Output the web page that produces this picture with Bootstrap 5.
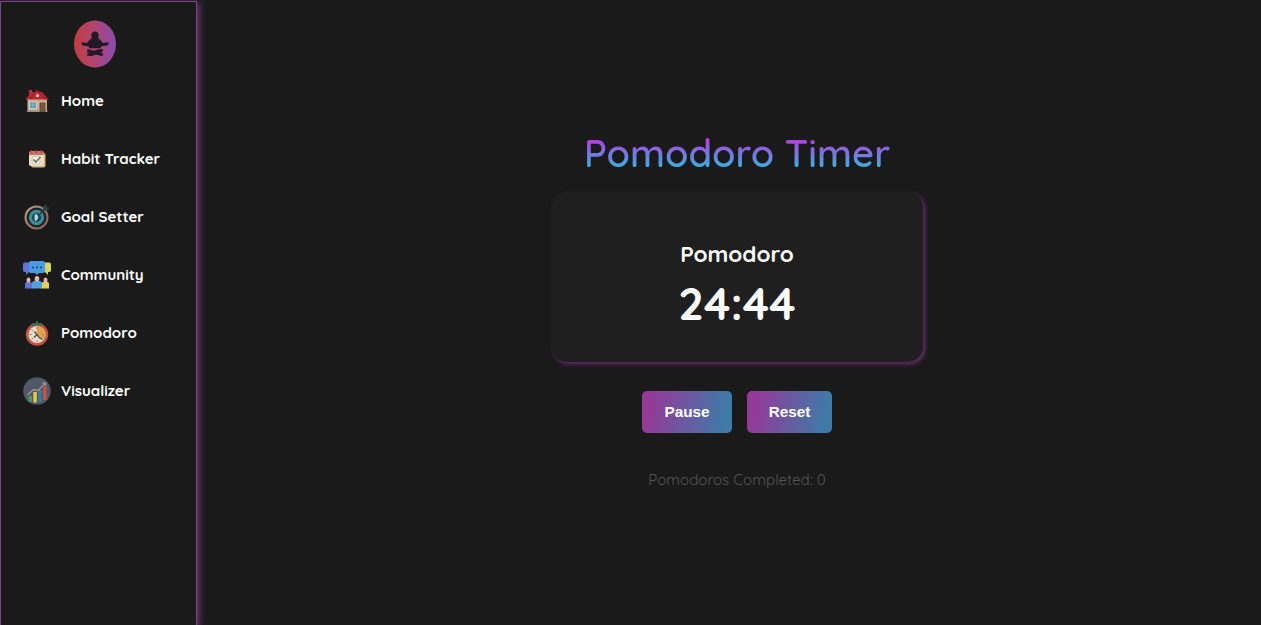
<!DOCTYPE html>
<html lang="en">
<head>
<meta charset="utf-8">
<meta name="viewport" content="width=device-width, initial-scale=1">
<title>Pomodoro Timer</title>
<link href="https://cdn.jsdelivr.net/npm/bootstrap@5.3.0/dist/css/bootstrap.min.css" rel="stylesheet">
<style>
body{background:#1a1a1a;color:#fff;font-family:Quicksand,Lato,sans-serif;overflow:hidden}
.side{width:197px;margin-top:1px;border:1px solid #76458a;border-bottom:0;box-shadow:2px 2px 7px #6b4070}
.brand{height:70px;padding:18px 0 0 72px}
.brand svg,.side-link svg{display:block}
.side-link{height:58px;padding:0 0 0 22px;gap:10px;color:#fff;font-weight:700;font-size:15px;line-height:20px}
.side-link svg{margin-top:-1px}
.side-link:hover{color:#d59be8}
.stage{padding:133px 0 0 16px}
.title{font-size:38.1px;line-height:40px;height:40px;margin-bottom:19px;font-weight:600;background:linear-gradient(#b53be0 15%,#3daee0 85%);background-clip:text;-webkit-background-clip:text;color:transparent}
.timer{width:371px;height:170px;border-radius:15px;background:#1f1f1f;box-shadow:2px 2px 4px #6b2b72;padding-top:48px}
.phase{font-size:22.5px;line-height:28px;font-weight:700;margin-bottom:5px}
.clock{font-size:45px;line-height:60px;font-weight:700}
.actions{gap:15px;margin-top:29px}
.act{height:42px;border:0;border-radius:5px;background:linear-gradient(100deg,#933a98 10%,#3f7aa8 90%);color:#fff;font:bold 15.3px/20px "Liberation Sans",Arial,sans-serif;padding:0 0 1px}
.act:hover{color:#fff}
.pause{width:90px}.reset{width:85px}
.done{font-size:15.100px;line-height:20px;color:#555;margin-top:37px;font-weight:400}
.t{white-space:nowrap}
</style>
<script src="https://cdn.jsdelivr.net/npm/bootstrap@5.3.0/dist/js/bootstrap.bundle.min.js"></script>
</head>
<body>
<div class="d-flex vh-100">
<aside class="side flex-shrink-0">
<div class="brand">
<svg width="43" height="48" viewBox="0 0 43 48"><defs><linearGradient id="lg"><stop offset=".05" stop-color="#c03f44"/><stop offset=".5" stop-color="#b04474"/><stop offset="1" stop-color="#884aae"/></linearGradient></defs><ellipse cx="22" cy="24" rx="21" ry="23.600" fill="url(#lg)"/><g fill="#211923"><ellipse cx="22" cy="15.500" rx="3.600" ry="4"/><path d="M19 18h6l3.500 3 1.500 2 5.500-.8q.8 1.800-1.200 3.300l-5.800.8-1 2H16.500l-1-2-5.800-.8Q8 24.500 8.500 22.200l5.500.8 1.500-2z"/><path d="M14.500 29l15.500 4.300-.5 2.900-15.500-4z"/><path d="M29.500 29l-5 .5-10.500 4.200.3 2 5 .3 10.500-4.500z"/></g></svg>
</div>
<nav class="nav flex-column flex-nowrap">
<a class="side-link d-flex align-items-center text-decoration-none" href="#">
<svg width="28" height="28" viewBox="0 0 28 28"><path d="M4.500 11h19.500v14H4.500z" fill="#c5ae93"/><path d="M4 23.500h20.500V25H4z" fill="#9b8c7c"/><path d="M6 3h3v5H6z" fill="#a33b3d"/><path d="M2 12.500L9 5h10l7 8h-2.500l-2-1H6z" fill="#b7252f"/><path d="M7 12.500l7-9.500 8 9.500" fill="#bd2632" stroke="#902632"/><circle cx="14.500" cy="8.700" r="1.600" fill="#e7c3c4"/><path d="M6.500 15h7v6.500h-7z" fill="#549ab4" stroke="#d9d1b9"/><path d="M10 15v6.500M6.500 18h7" stroke="#9dc5ce" stroke-width=".7"/><path d="M17 16h5v8.500h-5z" fill="#80553f" stroke="#5d4237" stroke-width=".8"/></svg><span class="t">Home</span></a>
<a class="side-link d-flex align-items-center text-decoration-none" href="#">
<svg width="28" height="28" viewBox="0 0 28 28"><rect x="8" y="8" width="14.500" height="14.500" rx="2" fill="#d9b766"/><rect x="6" y="6.500" width="15" height="14.500" rx="1.800" fill="#e8dcca"/><path d="M6 10V7.500Q6 6 8 6h11q2 0 2 1.500V10z" fill="#c97262"/><path d="M8.500 5v3M13.300 5v3M18 5v3" stroke="#9f4842" stroke-width="1.200"/><rect x="9.300" y="11.500" width="7.500" height="7.500" rx="1" fill="#f5efe0" stroke="#bfc1a8" stroke-width=".7"/><path d="M10.500 14.500l2.300 2.500 4.700-5" fill="none" stroke="#667a60" stroke-width="1.600"/></svg><span class="t">Habit Tracker</span></a>
<a class="side-link d-flex align-items-center text-decoration-none" href="#">
<svg width="28" height="28" viewBox="0 0 28 28"><defs><linearGradient id="ring" x2="1" y2="1"><stop stop-color="#bc9c81"/><stop offset=".5" stop-color="#a27b70"/><stop offset="1" stop-color="#8c5b5c"/></linearGradient></defs><circle cx="13.500" cy="14.500" r="11" fill="#1b2427" stroke="url(#ring)" stroke-width="2"/><circle cx="13.500" cy="14.500" r="6" fill="none" stroke="#3c8d92" stroke-width="3.400"/><circle cx="13.500" cy="14.500" r="4" fill="#164b61"/><path d="M12.500 10.500q5.500 3.500 0 8-2-4 0-8" fill="#b6d6da"/><path d="M16 12l6-6" stroke="#213f4b" stroke-width="1.500"/><path d="M20 7V3.500L23.500 1v3.500H27L23.500 8z" fill="#294250"/></svg><span class="t">Goal Setter</span></a>
<a class="side-link d-flex align-items-center text-decoration-none" href="#">
<svg width="28" height="28" viewBox="0 0 28 28"><rect x="0" y="1.500" width="13" height="9.500" rx="1.800" fill="#6673d7"/><path d="M3 9v5l4-4z" fill="#6673d7"/><rect x="16" y="1.500" width="12" height="9.500" rx="1.800" fill="#ddd45d"/><path d="M25 9v5l-4-4z" fill="#ddd45d"/><path d="M8 0h12q2 0 2 2v8q0 2-2 2h-4l-2 2-2-2H8q-2 0-2-2V2q0-2 2-2z" fill="#489de2"/><g fill="#234b7f"><circle cx="10" cy="6.500" r="1.100"/><circle cx="14" cy="6.500" r="1.100"/><circle cx="18" cy="6.500" r="1.100"/></g><path d="M2 27.500v-4q0-3 3.500-3t4 3v4z" fill="#6175d8"/><path d="M18.500 27.500v-4q0-3 4-3t3.500 3v4z" fill="#e2cf57"/><path d="M9 27.500v-5q0-3 5-3t5 3v5z" fill="#4ca3e2"/><g fill="#e9b8a5"><ellipse cx="5.500" cy="19" rx="2" ry="2.500"/><ellipse cx="14" cy="17.800" rx="2.300" ry="2.800"/><ellipse cx="22.500" cy="19" rx="2" ry="2.500"/></g></svg><span class="t">Community</span></a>
<a class="side-link d-flex align-items-center text-decoration-none" href="#">
<svg width="28" height="28" viewBox="0 0 28 28"><circle cx="14" cy="15.500" r="11.200" fill="#c7513f"/><circle cx="14" cy="15.500" r="8.600" fill="#e9dbc9"/><path d="M14 15.500V6.900a8.600 8.600 0 0 1 7 13.500z" fill="#e0a24c"/><path d="M14 8v2M6.500 15.500h2M14 21.500V23M19.500 15.500H21M8.500 10.500l1.300 1.200M8.500 20.500l1.400-1.300" stroke="#84776a"/><path d="M11.500 12.500l5 6.200 3 1.600M14 15.500l-3 3" fill="none" stroke="#4b5a50" stroke-width="1.500"/><path d="M13.500 5.800Q10 8.500 8 5.500q2-2.300 5-1L13 2h1.800l-.2 2.500q3-1.300 6 1-3 2.500-7.100.3z" fill="#347052"/></svg><span class="t">Pomodoro</span></a>
<a class="side-link d-flex align-items-center text-decoration-none" href="#">
<svg width="28" height="28" viewBox="0 0 28 28"><circle cx="14" cy="14" r="13.800" fill="#505865"/><path d="M5.500 19h3.500v6H5.500z" fill="#4d936a"/><path d="M10.300 15h3.500v10.500h-3.500z" fill="#e6c849"/><path d="M15.200 13h3.500v12h-3.500z" fill="#387aaa"/><path d="M20 9.500h3.700V23H20z" fill="#c65143"/><path d="M4.500 18l6-5.500 4.500 1 7.500-7.500M19 5.800l3.500.2v3" fill="none" stroke="#a58e94" stroke-width="1.300"/></svg><span class="t">Visualizer</span></a>
</nav>
</aside>
<main class="stage flex-grow-1 d-flex flex-column align-items-center">
<h1 class="title t">Pomodoro Timer</h1>
<section class="timer text-center">
<h2 class="phase"><span class="t">Pomodoro</span></h2>
<div class="clock"><span class="t">24:44</span></div>
</section>
<div class="actions d-flex"><button class="btn act pause" type="button">Pause</button><button class="btn act reset" type="button">Reset</button></div>
<p class="done t mb-0">Pomodoros Completed: 0</p>
</main>
</div>
</body>
</html>
